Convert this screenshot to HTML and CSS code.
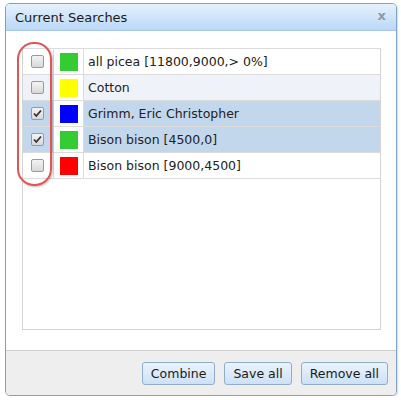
FILE: index.html
```html
<!DOCTYPE html>
<html>
<head>
<meta charset="utf-8">
<link rel="stylesheet" href="styles.css">
</head>
<body>
<div class="dialog">
  <div class="titlebar">
    <span class="title">Current Searches</span>
    <span class="close">x</span>
  </div>
  <div class="content">
    <div class="listbox">
      <div class="row">
        <div class="c-check"><span class="cb"></span></div>
        <div class="c-color"><span class="sw" style="background:#33cc33"></span></div>
        <div class="c-text">all picea [11800,9000,&gt; 0%]</div>
      </div>
      <div class="row alt">
        <div class="c-check"><span class="cb"></span></div>
        <div class="c-color"><span class="sw" style="background:#ffff00"></span></div>
        <div class="c-text">Cotton</div>
      </div>
      <div class="row sel">
        <div class="c-check"><span class="cb on"><svg viewBox="0 0 13 13" width="13" height="13"><path d="M3 6.5 L5.3 9 L10 3.5" fill="none" stroke="#333" stroke-width="1.8"/></svg></span></div>
        <div class="c-color"><span class="sw" style="background:#0000ff"></span></div>
        <div class="c-text">Grimm, Eric Christopher</div>
      </div>
      <div class="row sel">
        <div class="c-check"><span class="cb on"><svg viewBox="0 0 13 13" width="13" height="13"><path d="M3 6.5 L5.3 9 L10 3.5" fill="none" stroke="#333" stroke-width="1.8"/></svg></span></div>
        <div class="c-color"><span class="sw" style="background:#33cc33"></span></div>
        <div class="c-text">Bison bison [4500,0]</div>
      </div>
      <div class="row">
        <div class="c-check"><span class="cb"></span></div>
        <div class="c-color"><span class="sw" style="background:#ff0000"></span></div>
        <div class="c-text">Bison bison [9000,4500]</div>
      </div>
    </div>
  </div>
  <div class="footer">
    <button class="btn">Combine</button>
    <button class="btn">Save all</button>
    <button class="btn">Remove all</button>
  </div>
  <div class="oval"></div>
</div>
</body>
</html>
```

FILE: styles.css
```css
html, body {
  margin: 0;
  padding: 0;
  background: #ffffff;
}
body {
  font-family: "DejaVu Sans", Verdana, sans-serif;
  font-size: 12.5px;
  color: #222;
}
.dialog {
  position: relative;
  margin: 3px 0 0 5px;
  width: 392px;
  height: 393px;
  box-sizing: border-box;
  border: 1px solid #7ea1c6;
  border-radius: 5px;
  background: #fff;
  display: flex;
  flex-direction: column;
  overflow: hidden;
  box-shadow: 1px 1px 2px rgba(0,0,0,0.15);
}
.titlebar {
  height: 27px;
  box-sizing: border-box;
  flex: none;
  border-bottom: 1px solid #a8c6e6;
  background: linear-gradient(#e6f1fd, #bad8f7);
  display: flex;
  align-items: center;
  justify-content: space-between;
  padding: 0 10px 0 9px;
}
.title {
  font-size: 13px;
  color: #1a1a1a;
}
.close {
  font-weight: bold;
  font-size: 13px;
  color: #8a9aa8;
  margin-top: -4px;
}
.content {
  flex: 1;
  padding: 17px 15px 20px 16px;
  display: flex;
}
.listbox {
  flex: 1;
  border: 1px solid #d4d4d4;
  border-top: none;
  background: #fff;
}
.row {
  display: flex;
  height: 25px;
  border-top: 1px solid #dcdcdc;
}
.row:last-child {
  border-bottom: 1px solid #dcdcdc;
}
.row.alt { background: #eff3f9; }
.row.sel { background: #c2d7eb; }
.c-check {
  width: 30px;
  flex: none;
  display: flex;
  align-items: center;
  justify-content: center;
  border-right: 1px solid #dcdcdc;
}
.c-color {
  width: 29px;
  flex: none;
  display: flex;
  align-items: center;
  justify-content: center;
  border-right: 1px solid #dcdcdc;
  background: #fff;
}
.sw {
  width: 18px;
  height: 18px;
  display: block;
}
.c-text {
  flex: 1;
  display: flex;
  align-items: center;
  padding-left: 4px;
  white-space: nowrap;
}
.cb {
  width: 11px;
  height: 11px;
  border: 1px solid #9a9a9a;
  border-radius: 2px;
  background: linear-gradient(#f4f4f4, #d8d8d8);
  display: block;
  position: relative;
  margin-left: -1px;
}
.cb svg {
  position: absolute;
  left: -1px;
  top: -1px;
}
.footer {
  height: 45px;
  box-sizing: border-box;
  flex: none;
  border-top: 1px solid #cfcfcf;
  background: #eeeeee;
  display: flex;
  justify-content: flex-end;
  align-items: flex-start;
  gap: 9px;
  padding: 11px 8px 0 0;
}
.btn {
  height: 23px;
  padding: 0 8px;
  font-family: "DejaVu Sans", Verdana, sans-serif;
  font-size: 12.5px;
  color: #1a1a1a;
  border: 1px solid #8eadd0;
  border-radius: 3px;
  background: linear-gradient(#eaf3fd, #cde1f6);
}
.oval {
  position: absolute;
  left: 11px;
  top: 38px;
  width: 31px;
  height: 140px;
  border: 2.5px solid #e05656;
  border-radius: 17px;
  box-shadow: 1px 1px 2px rgba(0,0,0,0.25);
}
```
